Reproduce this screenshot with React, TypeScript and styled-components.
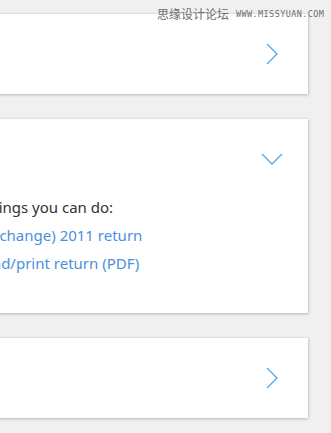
import React from 'react';
import styled, { createGlobalStyle } from 'styled-components';

const colors = {
	page: '#f0f0f0',
	card: '#ffffff',
	text: '#333333',
	link: '#4a90dd',
	chevron: '#5aa5e2',
	mark: '#6f6f6f',
};

const GlobalStyle = createGlobalStyle`
	html, body {
		margin: 0;
		padding: 0;
		background: ${colors.page};
		overflow: hidden;
	}
	body {
		font-family: "Noto Sans", Lato, sans-serif;
	}
`;

const Page = styled.div`
	position: relative;
	width: 331px;
	height: 433px;
	overflow: hidden;
`;

const List = styled.div`
	display: flex;
	flex-direction: column;
	gap: 25px;
	padding-top: 14px;
	margin-left: -92px;
	width: 400px;
`;

const Card = styled.section`
	background: ${colors.card};
	box-shadow: 0 1px 3px rgba(0, 0, 0, 0.22), 1px 0 2px rgba(0, 0, 0, 0.08);
`;

const Header = styled.div<{ inset: number }>`
	height: 80px;
	display: flex;
	align-items: center;
	justify-content: flex-end;
	padding-right: ${props => props.inset}px;
`;

const Body = styled.div`
	display: flex;
	flex-direction: column;
	padding: 0 0 36px 31px;
	margin-top: -6px;
`;

const Heading = styled.span`
	color: ${colors.text};
	font-size: 15px;
	line-height: 28px;
`;

const Link = styled.a`
	color: ${colors.link};
	font-size: 15px;
	line-height: 28px;
	text-decoration: none;
`;

const Watermark = styled.div`
	position: absolute;
	top: 6px;
	left: 157px;
	display: flex;
	align-items: center;
	gap: 7px;
	color: ${colors.mark};
`;

const MarkCn = styled.span`
	font-family: "Noto Sans CJK SC", sans-serif;
	font-size: 12px;
	line-height: 16px;
`;

const MarkUrl = styled.span`
	font-family: "DejaVu Sans Mono", monospace;
	font-size: 8.5px;
	line-height: 16px;
	letter-spacing: 0.4px;
`;

const ChevronRight = () => (
	<svg width="12" height="22" viewBox="0 0 12 22">
		<polyline points="1,1 11,11 1,21" fill="none" stroke={colors.chevron} strokeWidth="1.3" />
	</svg>
);

const ChevronDown = () => (
	<svg width="22" height="12" viewBox="0 0 22 12">
		<polyline points="1,1 11,11 21,1" fill="none" stroke={colors.chevron} strokeWidth="1.3" />
	</svg>
);

export default function App() {
	return (
		<Page>
			<GlobalStyle />
			<List>
				<Card>
					<Header inset={30}>
						<ChevronRight />
					</Header>
				</Card>
				<Card>
					<Header inset={25}>
						<ChevronDown />
					</Header>
					<Body>
						<Heading>Other things you can do:</Heading>
						<Link href="#">View (or change) 2011 return</Link>
						<Link href="#">Download/print return (PDF)</Link>
					</Body>
				</Card>
				<Card>
					<Header inset={30}>
						<ChevronRight />
					</Header>
				</Card>
			</List>
			<Watermark>
				<MarkCn>思缘设计论坛</MarkCn>
				<MarkUrl>WWW.MISSYUAN.COM</MarkUrl>
			</Watermark>
		</Page>
	);
}
